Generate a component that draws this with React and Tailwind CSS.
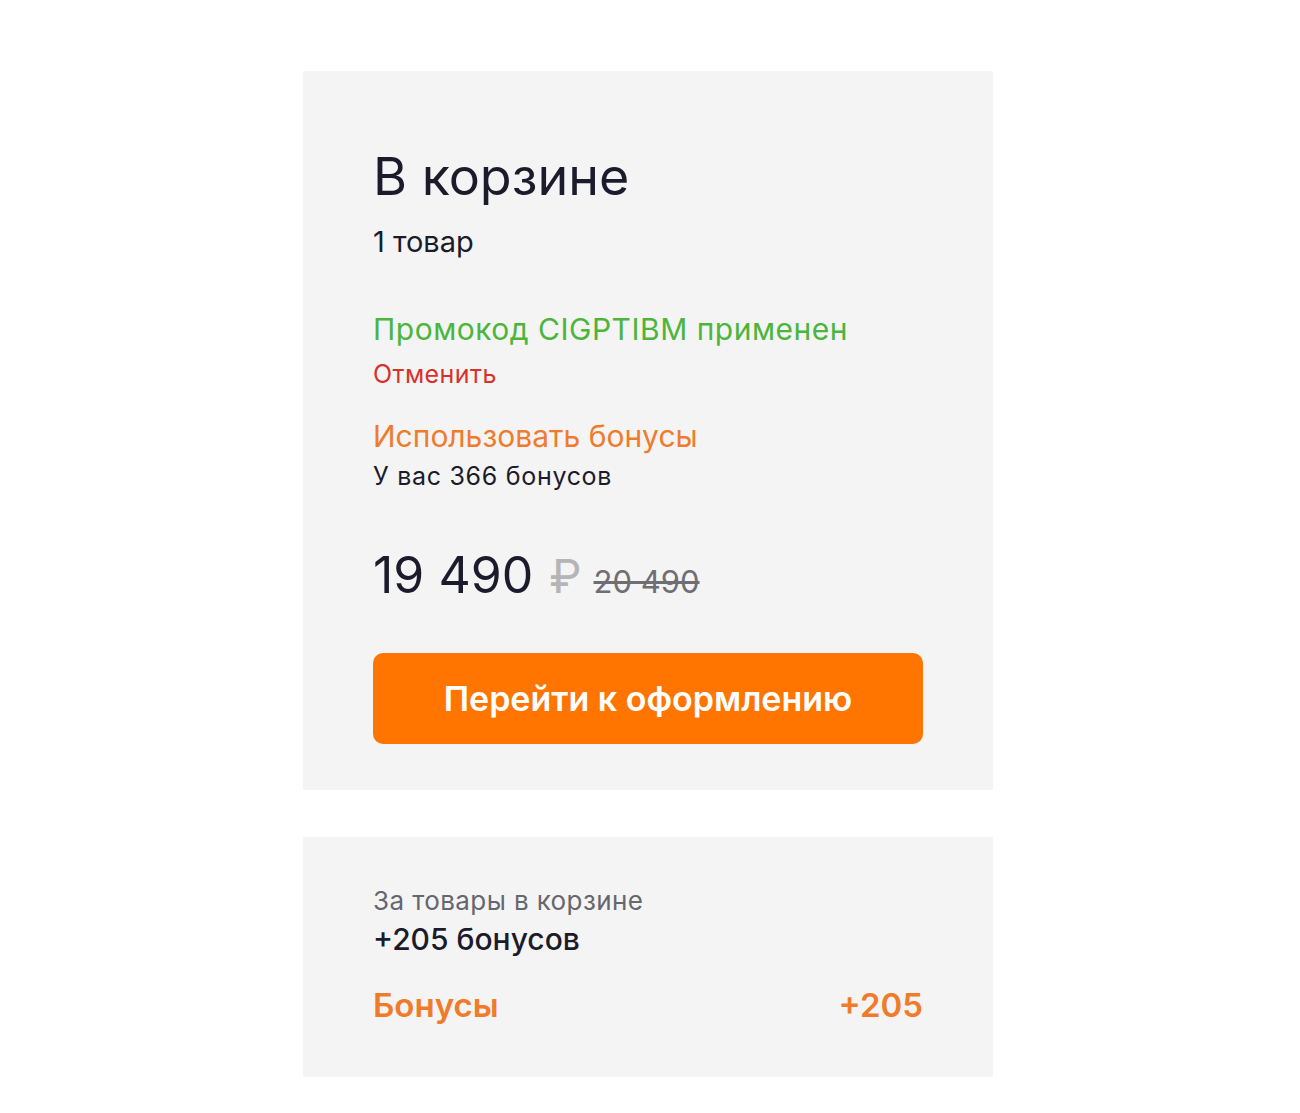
import React from 'react'

const font = { fontFamily: 'Inter, "Noto Sans", sans-serif' }

function CartSummary() {
    return (
        <div className="w-[690px] bg-[#f4f4f5] px-[70px] pt-[78px] pb-[46px]">
            <h1 className="text-[52px] leading-[56px] font-normal text-[#1b1b2b]">В корзине</h1>
            <div className="mt-[20px] text-[29px] leading-[34px] text-[#1b1b2b]">1 товар</div>

            {/* Promo */}
            <div className="mt-[52px] text-[30px] leading-[36px] tracking-[0.5px] text-[#4cb53b]">Промокод CIGPTIBM применен</div>
            <button className="mt-[12px] block text-[25px] leading-[30px] tracking-[0.4px] text-[#d8312a]">Отменить</button>

            {/* Bonuses */}
            <button className="mt-[30px] block text-[30px] leading-[34px] text-[#f07b2a]">Использовать бонусы</button>
            <div className="mt-[8px] text-[25px] leading-[30px] tracking-[0.7px] text-[#1b1b2b]">У вас 366 бонусов</div>

            {/* Price */}
            <div className="mt-[56px] flex items-baseline">
                <span className="text-[50px] leading-[56px] text-[#1b1b2b]">19 490</span>
                <span className="ml-[16px] text-[46px] leading-[56px] text-[#b5b5b8]">₽</span>
                <span className="ml-[12px] text-[31px] leading-[36px] text-[#6e6e74] line-through">20 490</span>
            </div>

            <button className="mt-[49px] w-full h-[91px] rounded-[10px] bg-[#ff7500] text-white text-[34px] font-semibold">
                Перейти к оформлению
            </button>
        </div>
    )
}

function BonusSummary() {
    return (
        <div className="w-[690px] bg-[#f4f4f5] px-[70px] pt-[49px] pb-[52px]">
            <div className="text-[26px] leading-[30px] tracking-[0.4px] text-[#66666e]">За товары в корзине</div>
            <div className="mt-[6px] text-[30px] leading-[34px] font-medium text-[#1b1b2b]">+205 бонусов</div>
            <div className="mt-[29px] flex items-center justify-between text-[33px] leading-[40px] font-semibold text-[#f07b2a]">
                <span>Бонусы</span>
                <span>+205</span>
            </div>
        </div>
    )
}

export default function App() {
    return (
        <div className="min-h-screen bg-white pl-[303px] pt-[71px]" style={font}>
            <div className="flex flex-col gap-[47px]">
                <CartSummary />
                <BonusSummary />
            </div>
        </div>
    )
}
